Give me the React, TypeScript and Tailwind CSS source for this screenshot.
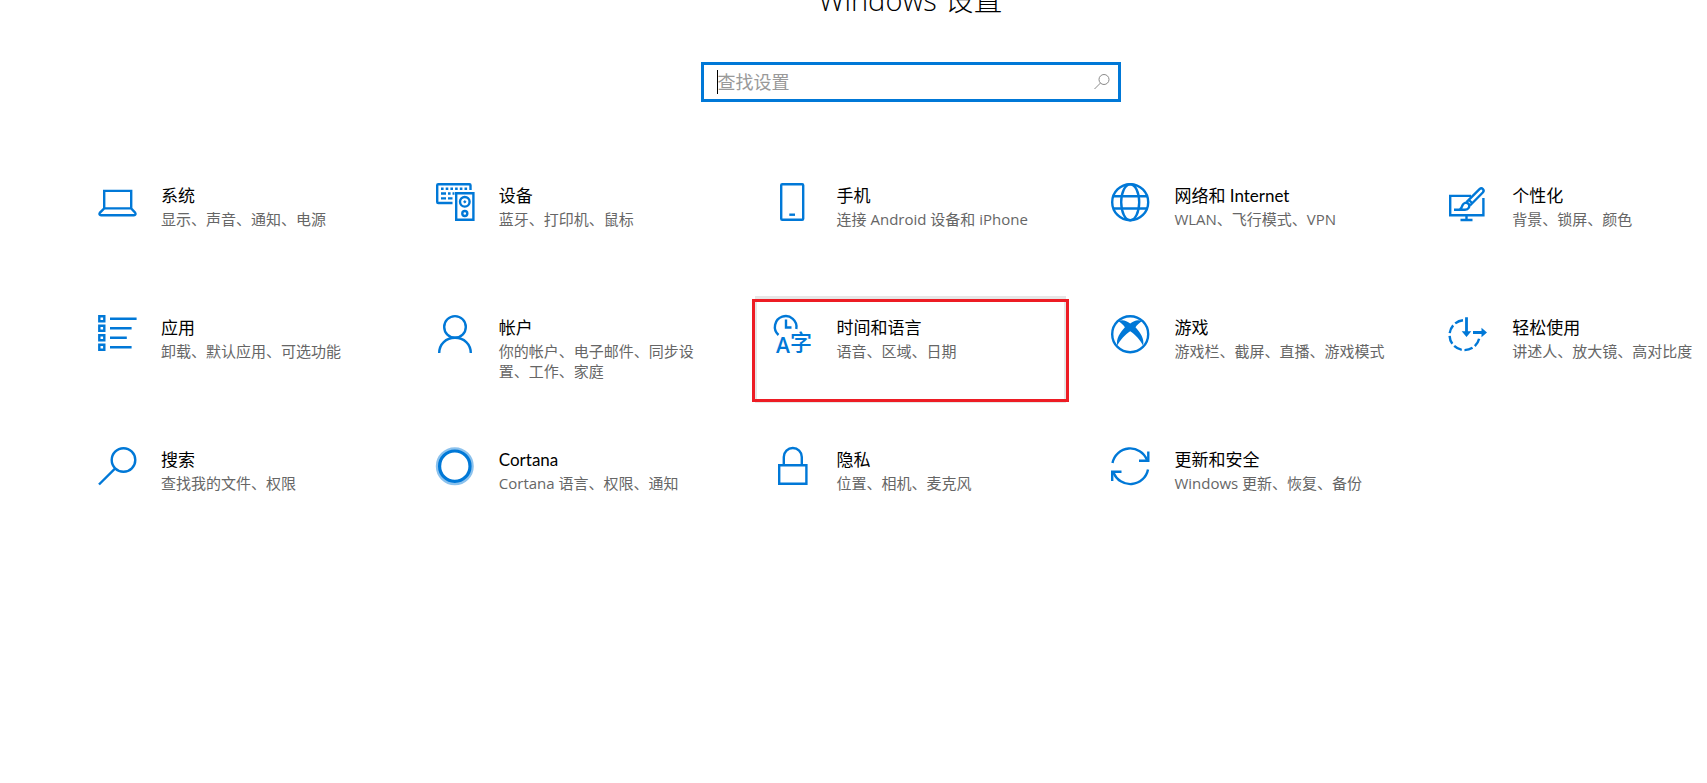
import type { ReactNode } from "react";

type Category = {
  title: string;
  description: string;
  icon: ReactNode;
  highlighted?: boolean;
};

function Icon({ children }: { children: ReactNode }) {
  return (
    <svg
      viewBox="0 0 40 40"
      fill="none"
      stroke="currentColor"
      strokeWidth="2.4"
      aria-hidden="true"
      className="size-10 shrink-0 overflow-visible text-[#0078d7]"
    >
      {children}
    </svg>
  );
}

const categories: Category[] = [
  {
    title: "系统",
    description: "显示、声音、通知、电源",
    icon: (
      <Icon>
        <path d="M6.2 25.4V7.9h27v17.5M6.2 25.4h27l4 4.4c.8 1.2.2 2.4-1.2 2.4H3c-1.4 0-2-1.200-1.200-2.400z" />
      </Icon>
    ),
  },
  {
    title: "设备",
    description: "蓝牙、打印机、鼠标",
    icon: (
      <Icon>
        <path d="M16.5 20H2.2Q1.2 20 1.2 19V2.2Q1.2 1.2 2.2 1.2H33.5Q34.500 1.2 34.500 2.2V7" />
        <path d="M5 5.700h27" strokeDasharray="2.6 2.1" />
        <path d="M5 10.500h5M12 10.500h2.600M16.500 10.500h2M5 15.400h5M12 15.400h4.500" />
        <path d="M20.200 10.200h17.200v26.600H20.200z" />
        <circle cx="28.8" cy="18.8" r="4.8" />
        <circle cx="28.8" cy="18.8" r="1" fill="currentColor" strokeWidth="1" />
        <circle cx="28.8" cy="30.5" r="2.5" />
      </Icon>
    ),
  },
  {
    title: "手机",
    description: "连接 Android 设备和 iPhone",
    icon: (
      <Icon>
        <rect x="7.2" y="1.2" width="22" height="35.6" rx="1" />
        <path d="M15.3 31.7h5.7" />
      </Icon>
    ),
  },
  {
    title: "网络和 Internet",
    description: "WLAN、飞行模式、VPN",
    icon: (
      <Icon>
        <circle cx="19.2" cy="19.2" r="18" />
        <ellipse cx="19.2" cy="19.2" rx="9" ry="18" />
        <path d="M2.5 13.200h33.500M2.500 25.500h33.500" />
      </Icon>
    ),
  },
  {
    title: "个性化",
    description: "背景、锁屏、颜色",
    icon: (
      <Icon>
        <path d="M22 12.900H1.200v19.400h33.200V15M17.500 32v5M11.500 37h12" />
        <path d="M5 26.800h11c3.500 0 5.500-3.500 3.500-6-2-2-5-1-6 1.500-.6 2-1 3.500-3 4.500" />
        <path d="M17.500 19.200 30.500 6.200c2.500-2.200 5.500.8 3.300 3.300L21 22.500M20 17l3.500 3.500" />
      </Icon>
    ),
  },
  {
    title: "应用",
    description: "卸载、默认应用、可选功能",
    icon: (
      <Icon>
        <path d="M1.300 1.300h5v5h-5zM1.300 10.700h5v5h-5zM1.300 20.200h5v5h-5zM1.300 29.700h5v5h-5z" />
        <path d="M12 3.800h26.600M12 13.200h21.600M12 22.700h16.800M12 32.200h21.600" />
      </Icon>
    ),
  },
  {
    title: "帐户",
    description: "你的帐户、电子邮件、同步设置、工作、家庭",
    icon: (
      <Icon>
        <circle cx="19" cy="11.9" r="10.8" />
        <path d="M3.200 38C3.200 29 10 22.800 19 22.800S34.800 29 34.800 38" />
      </Icon>
    ),
  },
  {
    title: "时间和语言",
    description: "语音、区域、日期",
    highlighted: true,
    icon: (
      <Icon>
        <path d="M4.500 20A10.800 10.800 0 1 1 22.300 14M12 4.500V12.500h5.500" />
        <g fill="currentColor" stroke="none">
          <text x="2" y="37.5" fontSize="21" fontWeight="600" fontFamily="Open Sans, sans-serif">
            A
          </text>
          <text x="16" y="34.5" fontSize="22" fontWeight="500" fontFamily="Noto Sans CJK SC, sans-serif">
            字
          </text>
        </g>
      </Icon>
    ),
  },
  {
    title: "游戏",
    description: "游戏栏、截屏、直播、游戏模式",
    icon: (
      <Icon>
        <circle cx="19.2" cy="19.2" r="18" />
        <path
          d="M7.500 6.200C11.500 4 15.500 5.800 19.200 8.500 22.900 5.800 26.900 4 30.900 6.200 28.500 7.500 26 10 24.500 12.300 29 17 34 24.500 32 30.500 29.500 25 24 19.500 19.200 16.200 14.400 19.500 8.900 25 6.400 30.500 4.400 24.500 9.400 17 13.900 12.300 12.400 10 9.900 7.500 7.500 6.200z"
          fill="currentColor"
          stroke="none"
        />
      </Icon>
    ),
  },
  {
    title: "轻松使用",
    description: "讲述人、放大镜、高对比度",
    icon: (
      <Icon>
        <path d="M14 5.200A15 15 0 1 0 30.500 21.500" strokeDasharray="8.5 2.8" />
        <path d="M17.500 2.300V19M24 17.500h10" strokeWidth="2.8" />
        <path d="M12.700 16.200h9.600L17.500 22zM32.500 12.700v9.600l5.500-4.800z" fill="currentColor" stroke="none" />
      </Icon>
    ),
  },
  {
    title: "搜索",
    description: "查找我的文件、权限",
    icon: (
      <Icon>
        <circle cx="25.5" cy="13" r="11.8" />
        <path d="M17.200 21.300 1 37.500" />
      </Icon>
    ),
  },
  {
    title: "Cortana",
    description: "Cortana 语言、权限、通知",
    icon: (
      <Icon>
        <circle cx="18.8" cy="19.2" r="17.2" strokeWidth="3.6" opacity="0.45" />
        <circle cx="18.8" cy="19.2" r="15.2" strokeWidth="3.2" />
      </Icon>
    ),
  },
  {
    title: "隐私",
    description: "位置、相机、麦克风",
    icon: (
      <Icon>
        <path d="M5.200 18.200h27.200v18.600H5.200zM9.800 18V10a9 9 0 0 1 18 0v8" />
      </Icon>
    ),
  },
  {
    title: "更新和安全",
    description: "Windows 更新、恢复、备份",
    icon: (
      <Icon>
        <path d="M1.500 16A18 18 0 0 1 36 13M37 22.500A18 18 0 0 1 2.500 25.500" />
        <path d="M37.300 4.500v9.300H28M1.200 34v-9.300h9.300" />
      </Icon>
    ),
  },
];

function CategoryTile({ title, description, icon, highlighted }: Category) {
  return (
    <a
      href="#"
      className="relative flex min-h-[107px] items-start gap-[23px] pt-[19px] pr-4 pl-[21px]"
    >
      {highlighted && (
        <>
          <span className="absolute inset-x-0.5 inset-y-0 border-x-2 border-y-[3px] border-[#e6e6e6]" />
          <span className="absolute -inset-x-px top-[3px] bottom-px border-[3px] border-[#ed1c24]" />
        </>
      )}
      {icon}
      <span className="flex min-w-0 flex-col">
        <span className="font-[Lato,'Noto_Sans_CJK_SC',sans-serif] text-[17px] leading-[26px] text-black">
          {title}
        </span>
        <span className="text-[15px] leading-5 text-[#666666]">{description}</span>
      </span>
    </a>
  );
}

export default function App() {
  return (
    <main className="min-h-screen overflow-hidden bg-white font-['Open_Sans','Noto_Sans_CJK_SC',sans-serif]">
      <div className="-mr-[37px] ml-[77px]">
        <h1 className="-mt-[18px] text-center text-[29px] leading-9 font-light text-black">
          Windows 设置
        </h1>

        <label className="mx-auto mt-11 flex h-10 w-[420px] items-center border-[3px] border-[#0078d7] pr-2 pl-[13px]">
          <span className="h-6 w-px bg-black" />
          <input
            type="text"
            aria-label="查找设置"
            placeholder="查找设置"
            className="min-w-0 flex-1 text-[18px] leading-6 text-black outline-none placeholder:text-[#999999]"
          />
          <svg
            viewBox="0 0 16 16"
            fill="none"
            stroke="currentColor"
            aria-hidden="true"
            className="size-4 text-[#8a8a8a]"
          >
            <circle cx="10" cy="5.5" r="5" />
            <path d="M6.500 9 .5 15" />
          </svg>
        </label>

        <nav className="mt-[62px] grid grid-cols-5 gap-x-[22px] gap-y-[25px]">
          {categories.map((category) => (
            <CategoryTile key={category.title} {...category} />
          ))}
        </nav>
      </div>
    </main>
  );
}
